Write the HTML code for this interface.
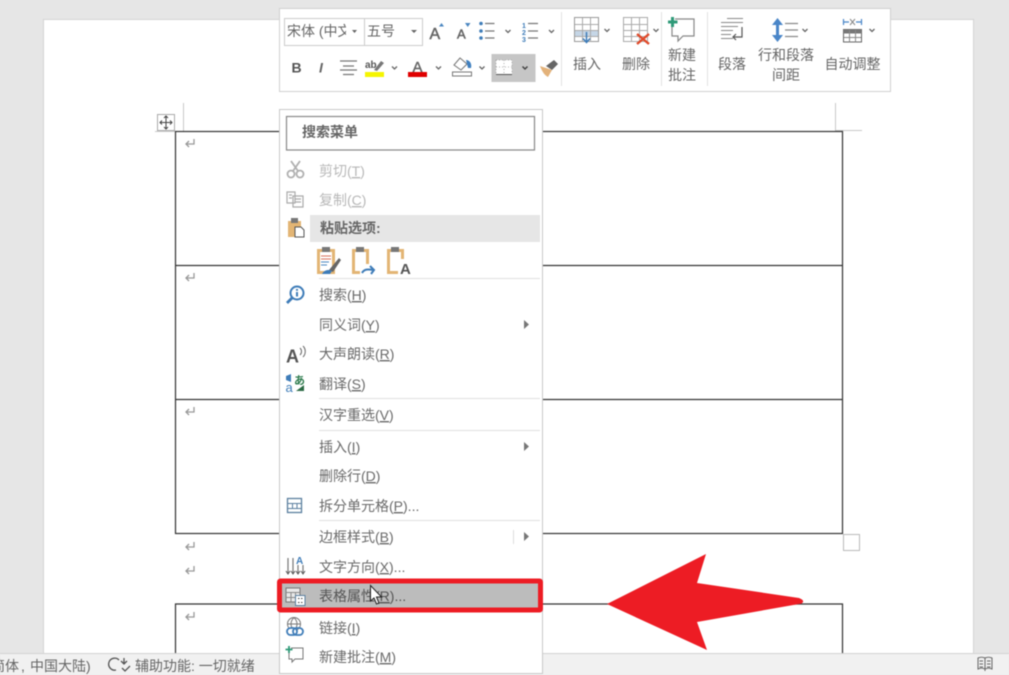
<!DOCTYPE html>
<html lang="zh-CN"><head><meta charset="utf-8"><title>Word</title>
<style>
html,body{margin:0;padding:0;width:1009px;height:675px;overflow:hidden;background:#e6e6e6}
svg{display:block;position:absolute;left:0;top:0;filter:blur(.5px)}
text{font-family:"Liberation Sans","Noto Sans CJK SC",sans-serif;font-size:14px;fill:#666}
.m{fill:#6a6a6a}.d{fill:#b8b8b8}.t{fill:#666}.c{text-anchor:middle}
.ch{fill:none;stroke:#666;stroke-width:1.3}
</style></head><body>
<svg width="1009" height="675" viewBox="0 0 1009 675" xmlns="http://www.w3.org/2000/svg">
<!-- page -->
<rect x="43.5" y="19.5" width="930" height="640" fill="#fff" stroke="#d4d4d4"/>
<!-- crop marks -->
<path d="M183.500 103V131M155 131.500H183M835.500 103V131M835 130.500H862" stroke="#c8c8c8" fill="none"/>
<!-- table -->
<g fill="none" stroke="#333" stroke-width="1.2">
<rect x="175.500" y="131.500" width="667" height="402"/>
<path d="M175 265.500H843M175 399.500H843"/>
<path d="M175.500 653V604H842.500V653"/>
</g>
<rect x="157.500" y="114.500" width="17" height="16" fill="#fff" stroke="#aaa"/>
<path d="M166 116V129M160 122.500H172M164 118l2-2 2 2M164 127l2 2 2-2M162 120.500l-2 2 2 2M170 120.500l2 2-2 2" stroke="#444" fill="none"/>
<rect x="843.500" y="534.500" width="16" height="16" fill="#fff" stroke="#bbb"/>
<!-- paragraph marks -->
<g fill="none" stroke="#999" stroke-width="1.300">
<path d="M194 139v5h-8M189 141l-3 3 3 3"/>
<path d="M194 273v5h-8M189 275l-3 3 3 3"/>
<path d="M194 407v5h-8M189 409l-3 3 3 3"/>
<path d="M194 542v5h-8M189 544l-3 3 3 3"/>
<path d="M194 566v5h-8M189 568l-3 3 3 3"/>
<path d="M194 612v5h-8M189 614l-3 3 3 3"/>
</g>
<!-- status bar -->
<rect x="0" y="653" width="1009" height="22" fill="#f1f1f1"/>
<path d="M0 653.500H1009" stroke="#d2d2d2"/>
<text x="-9" y="671">简体</text>
<text x="21" y="671">,</text>
<text x="30" y="671">中国大陆)</text>
<path d="M119 660a6 6 0 1 0-3 10M124 658v6M121 661l3 3 3-3M122 668l3 3 5-5" fill="none" stroke="#555" stroke-width="1.300"/>
<text x="135" y="671">辅助功能: 一切就绪</text>
<path d="M985 658c-2-1-5-1-7 0v11c2-1 5-1 7 0 2-1 5-1 7 0v-11c-2-1-5-1-7 0zM985 658v13M979.500 661h3.500M979.500 664h3.500M979.500 667h3.500M987 661h3.500M987 664h3.500M987 667h3.500" fill="#eee" stroke="#666"/>
<!-- mini toolbar -->
<rect x="279.500" y="8.500" width="611" height="83" fill="#fff" stroke="#d0d0d0"/>
<rect x="284.500" y="18.500" width="80" height="27" fill="#fff" stroke="#ccc"/>
<rect x="364.500" y="18.500" width="58" height="27" fill="#fff" stroke="#ccc"/>
<text x="287" y="36" class="t">宋体 (中文</text>
<rect x="346" y="20" width="17" height="24" fill="#fff"/>
<path d="M352 30h5l-2.500 3z" fill="#666"/>
<text x="367" y="36" class="t">五号</text>
<path d="M411 30h6l-3 3z" fill="#666"/>
<!-- row 1 icons -->
<text x="429.500" y="39" style="font-size:16px;fill:#666;stroke:#666;stroke-width:.5">A</text>
<path d="M439 26.500l2.500-3.500 2.500 3.500z" fill="#4a86c0"/>
<text x="457" y="38.500" style="font-size:13px;fill:#666;stroke:#666;stroke-width:.5">A</text>
<path d="M465 23h5.500l-2.750 4z" fill="#4a86c0"/>
<g fill="#3e7cb8"><circle cx="481" cy="23.500" r="1.800"/><circle cx="481" cy="31" r="1.800"/><circle cx="481" cy="38" r="1.800"/></g>
<path d="M485 23.500h9.500M485 31h9.500M485 38h9.500" stroke="#777" stroke-width="1.300"/>
<path class="ch" d="M505.500 30l2.500 2.500 2.500-2.500"/>
<text x="522" y="28" style="font-size:7px;fill:#3e7cb8;font-weight:bold">1</text>
<text x="522" y="35" style="font-size:7px;fill:#3e7cb8;font-weight:bold">2</text>
<text x="522" y="42" style="font-size:7px;fill:#3e7cb8;font-weight:bold">3</text>
<path d="M528 23.500h10M528 31h10M528 38h10" stroke="#777" stroke-width="1.300"/>
<path class="ch" d="M549 30l2.500 2.500 2.500-2.500"/>
<!-- row 2 icons -->
<text x="291.500" y="72.500" style="font-size:14px;font-weight:bold;fill:#555">B</text>
<text x="319" y="72.500" style="font-size:14px;font-style:italic;font-weight:bold;fill:#666">I</text>
<path d="M340 61h17M343 66h11M340 70h17M343 74.500h11" stroke="#777" stroke-width="1.200"/>
<text x="365" y="68" style="font-size:10px;fill:#555;font-weight:bold">ab</text>
<path d="M374 70l7-9 3 2-7 8z" fill="#777"/>
<rect x="365" y="72" width="19" height="5" fill="#f5f500"/>
<path class="ch" d="M392 66.500l2.500 2.500 2.500-2.500"/>
<text x="412.500" y="72" style="font-size:15px;fill:#666;stroke:#666;stroke-width:.4">A</text>
<rect x="408" y="72" width="19" height="5" fill="#e00000"/>
<path class="ch" d="M436 66.500l2.500 2.500 2.500-2.500"/>
<path d="M454 65l6-7 7 6-6 6zM452.500 72h19v4h-19z" fill="#fff" stroke="#777"/>
<path d="M466 60c4 0 6 4 5 8h-3z" fill="#3f7fbf"/>
<path class="ch" d="M479.500 66.500l2.500 2.500 2.500-2.500"/>
<rect x="491.500" y="54" width="44" height="28" fill="#c6c6c6"/>
<rect x="496" y="60" width="16" height="14" fill="#fff"/>
<path d="M496 60h16v14M496 60v14M504 60v14M496 67h16" fill="none" stroke="#999" stroke-width=".8" stroke-dasharray="1 2"/>
<path d="M496 74.500h16" stroke="#555"/>
<path class="ch" d="M522.500 66.500l2.500 2.500 2.500-2.500" style="stroke:#444;stroke-width:1.500"/>
<path d="M540 66l12 4-4 7c-4-2-6-6-8-11z" fill="#e3b27a"/>
<path d="M546 66l8-6 4 4-6 6z" fill="#666"/>
<!-- separators -->
<path d="M561.500 12V86M661.500 12V86M707.500 12V86" stroke="#e2e2e2"/>
<!-- insert -->
<rect x="574.500" y="17.500" width="24" height="24" fill="#fff" stroke="#999"/>
<rect x="575" y="30" width="23" height="7" fill="#c5d6e6"/>
<path d="M582.500 18V42M590.500 18V42M575 24.500H598M575 30.500H598M575 36.500H598" stroke="#aaa" fill="none"/>
<path d="M586.500 32v10M583 38.500l3.500 4 3.500-4" stroke="#3e7cb8" stroke-width="1.500" fill="none"/>
<path class="ch" d="M604.500 29l2.500 2.500 2.500-2.500"/>
<text x="587" y="69" class="c t">插入</text>
<!-- delete -->
<path d="M623.500 17.500H647.500V41.500H623.500ZM631.500 18V41M639.500 18V41M624 24.500H647M624 30.500H647M624 36.500H647" stroke="#aaa" fill="#fff"/>
<path d="M637 34l12 10M649 34l-12 10" stroke="#e04a2a" stroke-width="2.400"/>
<path class="ch" d="M653.500 29l2.500 2.500 2.500-2.500"/>
<text x="636" y="69" class="c t">删除</text>
<!-- new comment -->
<path d="M675 19h19v17h-11l-5 5v-5h-6V27" fill="#fff" stroke="#888" stroke-width="1.200"/>
<path d="M672.500 17v10M668 22h9.500" stroke="#2f9a78" stroke-width="3"/>
<text x="682" y="60" class="c t">新建</text>
<text x="682" y="80" class="c t">批注</text>
<!-- paragraph -->
<path d="M727 18.500h16M721 22.500h22M721 26.500h17M721 30.500h12M721 34.500h10M721 38.500h12" stroke="#888" fill="none"/>
<path d="M742 27v10h-9M736 34l-3 3 3 3" stroke="#555" stroke-width="1.200" fill="none"/>
<text x="732" y="69" class="c t">段落</text>
<!-- line spacing -->
<path d="M777.500 22V38" stroke="#4a86c8" stroke-width="3"/>
<path d="M772 25l5.500-7 5.500 7zM772 35l5.500 7 5.500-7z" fill="#4a86c8"/>
<path d="M785 23.500h13M785 30h13M785 36.500h13" stroke="#888" stroke-width="1.200"/>
<path class="ch" d="M802.500 29l2.500 2.500 2.500-2.500"/>
<text x="786" y="60" class="c t">行和段落</text>
<text x="786" y="80" class="c t">间距</text>
<!-- autofit -->
<path d="M843.500 19v6M861.500 19v6M844 22h5M856 22h5" stroke="#4a86c8" stroke-width="1.200" fill="none"/>
<path d="M850 19l5 6M855 19l-5 6" stroke="#888"/>
<rect x="843.500" y="29.500" width="18" height="12.500" fill="#fff" stroke="#666"/>
<rect x="843.500" y="29.500" width="18" height="4" fill="#777"/>
<path d="M849.500 30V42M855.500 30V42M844 37.500H861" stroke="#888"/>
<path class="ch" d="M869.500 29l2.500 2.500 2.500-2.500"/>
<text x="852.500" y="69" class="c t">自动调整</text>
<!-- context menu -->
<rect x="279.500" y="109.500" width="263" height="564" fill="#fff" stroke="#c8c8c8"/>
<rect x="286.500" y="116.500" width="248" height="33.500" fill="#fff" stroke="#888" stroke-width="1.200"/>
<text x="302" y="137" style="fill:#666;font-weight:bold">搜索菜单</text>
<text x="319" y="176" class="d">剪切(<tspan text-decoration="underline">T</tspan>)</text>
<text x="319" y="205" class="d">复制(<tspan text-decoration="underline">C</tspan>)</text>
<rect x="310" y="215" width="230" height="27" fill="#e6e6e6"/>
<text x="320" y="233" style="fill:#666;font-weight:bold">粘贴选项:</text>
<path d="M319 278.500H540M319 398.500H540M319 430.500H540M319 520.500H540" stroke="#e0e0e0"/>
<text x="319" y="300" class="m">搜索(<tspan text-decoration="underline">H</tspan>)</text>
<text x="319" y="330" class="m">同义词(<tspan text-decoration="underline">Y</tspan>)</text>
<text x="319" y="359" class="m">大声朗读(<tspan text-decoration="underline">R</tspan>)</text>
<text x="319" y="389" class="m">翻译(<tspan text-decoration="underline">S</tspan>)</text>
<text x="319" y="420" class="m">汉字重选(<tspan text-decoration="underline">V</tspan>)</text>
<text x="319" y="452" class="m">插入(<tspan text-decoration="underline">I</tspan>)</text>
<text x="319" y="481" class="m">删除行(<tspan text-decoration="underline">D</tspan>)</text>
<text x="319" y="511" class="m">拆分单元格(<tspan text-decoration="underline">P</tspan>)...</text>
<text x="319" y="542" class="m">边框样式(<tspan text-decoration="underline">B</tspan>)</text>
<text x="319" y="572" class="m">文字方向(<tspan text-decoration="underline">X</tspan>)...</text>
<path d="M524 320v9l5-4.500zM524 442v9l5-4.500zM524 532v9l5-4.500z" fill="#777"/>
<path d="M513.500 530V544" stroke="#ddd"/>
<!-- menu icons -->
<g fill="none" stroke="#b0b0b0" stroke-width="1.800">
<circle cx="291" cy="174" r="3.500"/><circle cx="300" cy="174" r="3.500"/>
<path d="M293 171l7-10M298 171l-7-10"/>
</g>
<path d="M287 192h8v11h-8zM293 196h10v11h-10zM295 199h6M295 202h6M289 195h3M289 198h3" fill="#fff" stroke="#aaa" stroke-width="1.200"/>
<rect x="288" y="221" width="13" height="16" fill="#e3b574"/>
<rect x="291" y="218" width="7" height="5" fill="#777"/>
<path d="M295 227h6l3 3v7h-9z" fill="#fff" stroke="#555"/>
<!-- paste icons -->
<g>
<rect x="318.500" y="250.500" width="15" height="22" fill="#fff" stroke="#e3b574" stroke-width="3"/>
<rect x="322" y="247" width="8" height="5" fill="#777"/>
<path d="M321 256h10M321 259h10" stroke="#d9705a"/><path d="M321 262h8M321 265h6" stroke="#4a86c0"/>
<path d="M329 270l10-12 2 2-8 12z" fill="#666"/>
<path d="M322 274c2-4 7-5 10-3l-2 3z" fill="#3e7cb8"/>
<rect x="353.500" y="250.500" width="14" height="22" fill="#fff" stroke="#e3b574" stroke-width="3"/>
<rect x="356" y="247" width="8" height="5" fill="#777"/>
<rect x="360" y="264" width="17" height="12" fill="#fff"/>
<path d="M362 273c2-4 6-4 11-3M370 266l4 4-3 4" fill="none" stroke="#3e7cb8" stroke-width="2"/>
<rect x="388.500" y="250.500" width="14" height="22" fill="#fff" stroke="#e3b574" stroke-width="3"/>
<rect x="391" y="247" width="8" height="5" fill="#777"/>
<rect x="398" y="259" width="15" height="17" fill="#fff"/>
<text x="400" y="274" style="font-size:15px;font-weight:bold;fill:#555">A</text>
</g>
<circle cx="297" cy="293" r="6.500" fill="#fff" stroke="#3e7cb8" stroke-width="2"/>
<path d="M292 298l-5 5" stroke="#3e7cb8" stroke-width="2.800"/>
<path d="M297 292v4.500M297 289v1.800" stroke="#3e7cb8" stroke-width="2"/>
<text x="286" y="362.500" style="font-size:18px;font-weight:bold;fill:#555">A</text>
<path d="M300 348c2 2 2 5 0 7M303 346c3 3 3 8 0 11" stroke="#666" fill="none"/>
<path d="M286 376l5-2v8l-5-2z" fill="#3e7cb8"/>
<text x="285.500" y="392" style="font-size:13px;fill:#3e7cb8">a</text>
<text x="294" y="384" style="font-size:11px;fill:#2b7a4b;font-weight:bold">あ</text>
<path d="M296 391h8v-6z" fill="#2b6a44"/>
<rect x="287.500" y="498.500" width="14" height="14" fill="#fff" stroke="#5b7f9f" stroke-width="1.300"/>
<path d="M288 503.500H301M292.500 503v5M297 503v5M288 508.500H301" stroke="#5b7f9f"/>
<path d="M288 558v16M293 558v16M298 565v9M303 565v9" stroke="#777" stroke-width="1.200"/>
<path d="M286 571l2 3 2-3M291 571l2 3 2-3M296 571l2 3 2-3M301 571l2 3 2-3" stroke="#555" fill="none"/>
<text x="296" y="564" style="font-size:10px;font-weight:bold;fill:#3e7cb8">A</text>
<!-- highlighted row -->
<rect x="279.500" y="581" width="261" height="29" fill="#bcbcbc" stroke="#ed1c24" stroke-width="5" rx="1"/>
<text x="319" y="601" style="fill:#555">表格属性(<tspan text-decoration="underline">R</tspan>)...</text>
<path d="M286 588h14v14h-14z" fill="#e8e8e8" stroke="#777"/>
<path d="M286 592.500h14M291 592v10M295.500 592v10M286 597.500h14" stroke="#888"/>
<rect x="295.500" y="595.500" width="9.500" height="10" fill="#fff" stroke="#5b7f9f"/>
<path d="M298 598.500h1.500M301 598.500h1.500M298 602.500h1.500M301 602.500h1.500" stroke="#444"/>
<!-- cursor -->
<path d="M370.500 585.500V601l3.500-3 2.500 6 2.500-1-2.500-6h5z" fill="#fff" stroke="#222"/>
<!-- links -->
<circle cx="294" cy="624" r="6.500" fill="#fff" stroke="#777"/>
<path d="M288 624h12M294 617.500c-4 4-4 9 0 13M294 617.500c4 4 4 9 0 13" stroke="#777" fill="none"/>
<rect x="287" y="628" width="10" height="7" rx="3.500" fill="#fff" stroke="#3e7cb8" stroke-width="1.800"/>
<rect x="293" y="628" width="10" height="7" rx="3.500" fill="none" stroke="#3e7cb8" stroke-width="1.800"/>
<text x="319" y="633" class="m">链接(<tspan text-decoration="underline">I</tspan>)</text>
<path d="M291 648h12v11h-8l-3 3v-3h-3v-7" fill="#fff" stroke="#777"/>
<path d="M289 646v7M285.500 649.500h7" stroke="#2f9a78" stroke-width="1.800"/>
<text x="319" y="662" class="m">新建批注(<tspan text-decoration="underline">M</tspan>)</text>
<!-- arrow -->
<path d="M607 604L706 554 697 583 799 598Q804 600 803 602 802 604 799 604L697 622 707 650Z" fill="#ed1c24"/>
</svg>
</body></html>
